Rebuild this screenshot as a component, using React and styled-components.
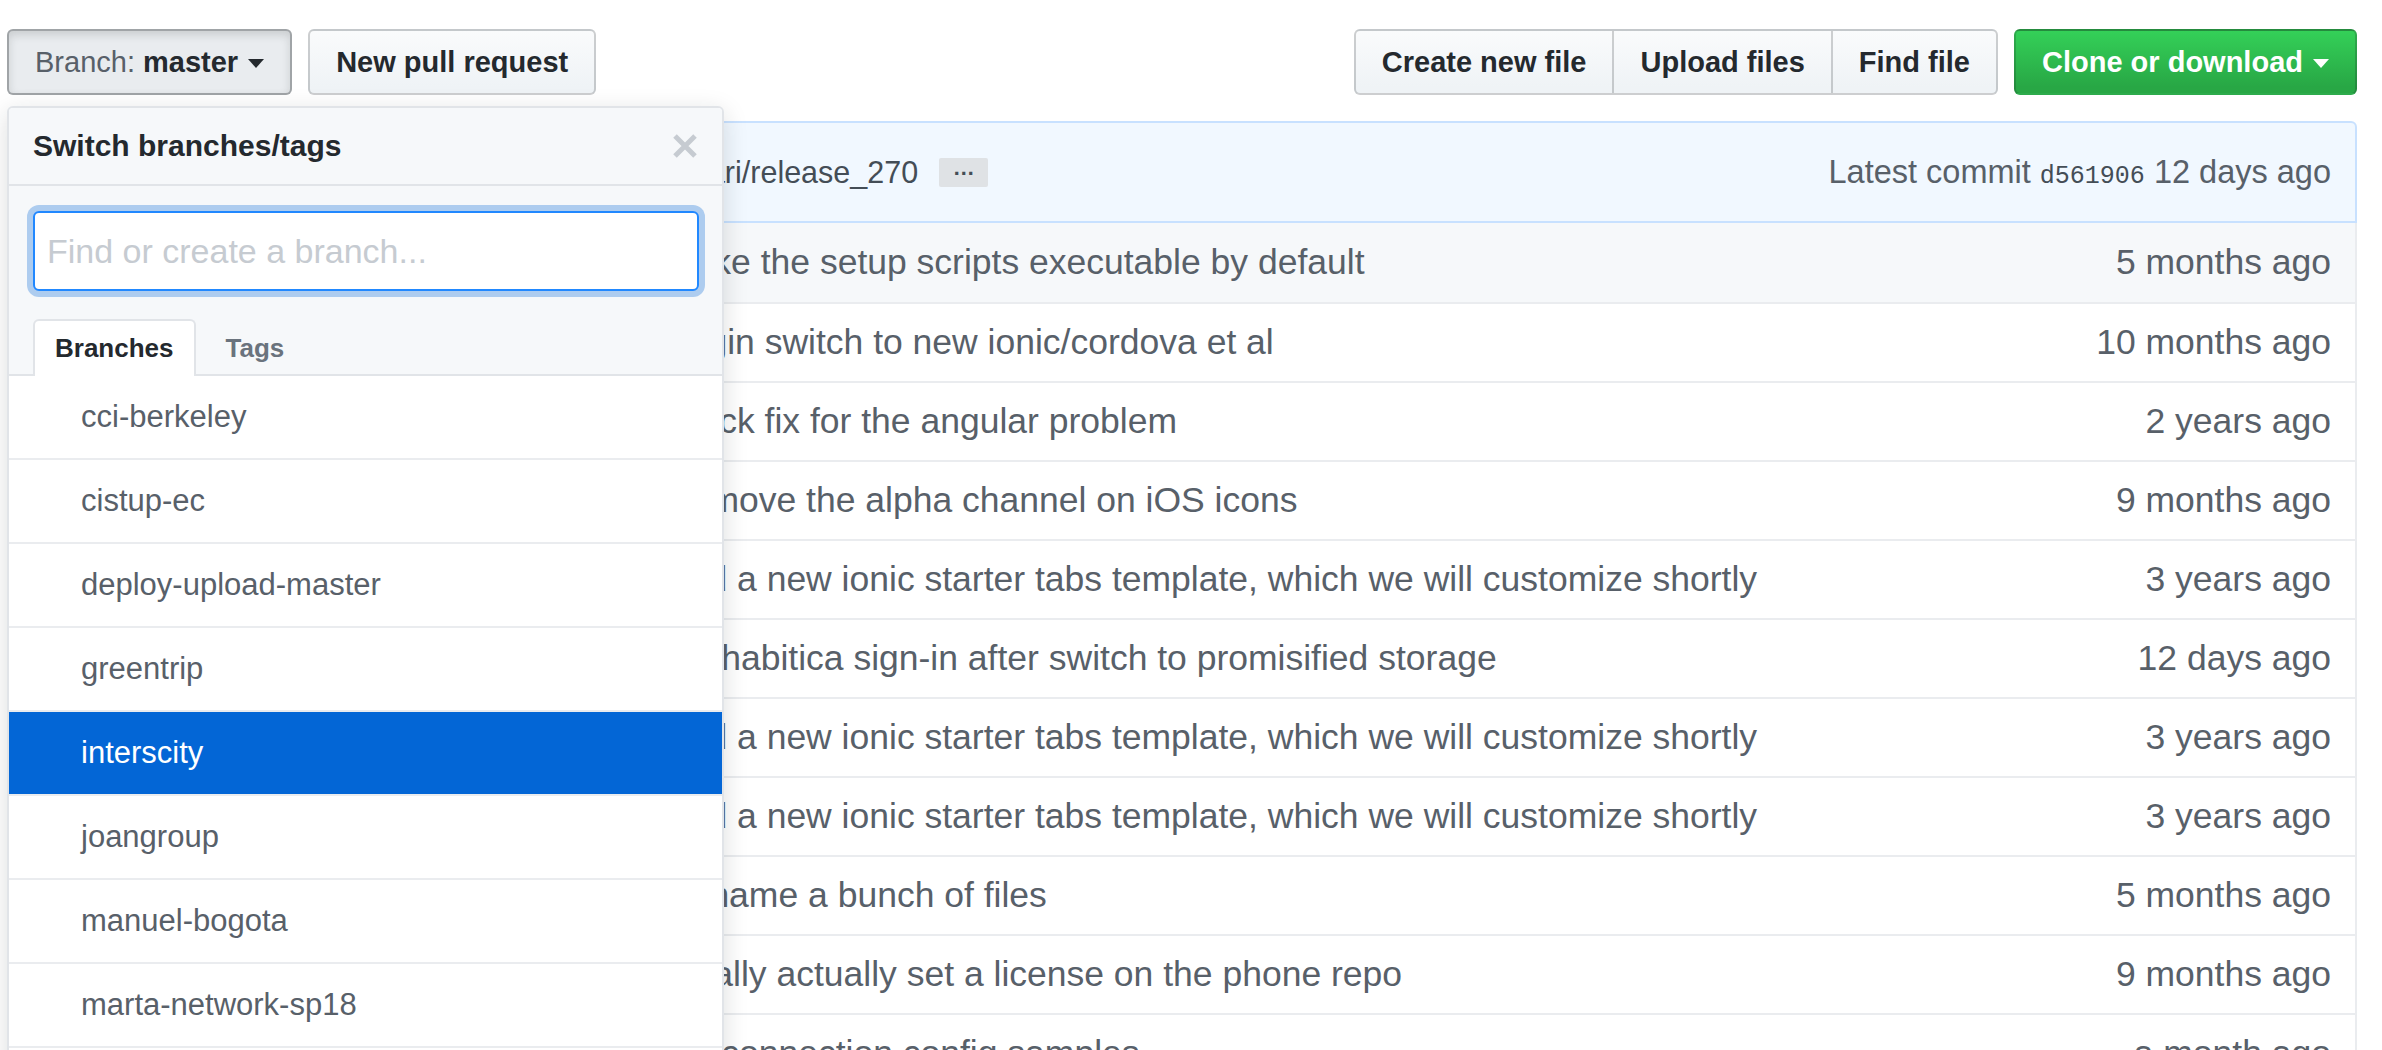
import React from "react";
import styled, {createGlobalStyle, css} from "styled-components";

const GlobalStyle = createGlobalStyle`
  html, body {
    margin: 0;
    padding: 0;
    background: #fff;
    overflow: hidden;
  }

  body {
    font-family: "Liberation Sans", Arial, Helvetica, sans-serif;
    color: #24292e;
  }

  * {
    box-sizing: border-box;
  }
`;

const branches = [
    "cci-berkeley",
    "cistup-ec",
    "deploy-upload-master",
    "greentrip",
    "interscity",
    "joangroup",
    "manuel-bogota",
    "marta-network-sp18",
    "master",
];

const files = [
    {message: "Make the setup scripts executable by default", age: "5 months ago"},
    {message: "Begin switch to new ionic/cordova et al", age: "10 months ago"},
    {message: "Quick fix for the angular problem", age: "2 years ago"},
    {message: "Remove the alpha channel on iOS icons", age: "9 months ago"},
    {message: "Add a new ionic starter tabs template, which we will customize shortly", age: "3 years ago"},
    {message: "Fix habitica sign-in after switch to promisified storage", age: "12 days ago"},
    {message: "Add a new ionic starter tabs template, which we will customize shortly", age: "3 years ago"},
    {message: "Add a new ionic starter tabs template, which we will customize shortly", age: "3 years ago"},
    {message: "Rename a bunch of files", age: "5 months ago"},
    {message: "Finally actually set a license on the phone repo", age: "9 months ago"},
    {message: "Fix connection config samples", age: "a month ago"},
];

const CloseIcon = () => (
    <svg width="26" height="26" viewBox="0 0 26 26">
        <path d="M3 3 L23 23 M23 3 L3 23" stroke="#c6cbd1" strokeWidth="5" strokeLinecap="butt"/>
    </svg>
);

export default function App() {
    return <Page>
        <GlobalStyle/>
        <Toolbar>
            <LeftGroup>
                <Button $selected>
                    <Muted>Branch:</Muted>&nbsp;master
                    <Caret/>
                </Button>
                <Button>New pull request</Button>

                <Menu>
                    <MenuHeader>
                        <MenuTitle>Switch branches/tags</MenuTitle>
                        <CloseIcon/>
                    </MenuHeader>
                    <MenuFilter>
                        <FilterInput placeholder="Find or create a branch..."/>
                        <Tabs>
                            <Tab $active>Branches</Tab>
                            <Tab>Tags</Tab>
                        </Tabs>
                    </MenuFilter>
                    <MenuList>
                        {branches.map(branch =>
                            <MenuItem key={branch} $selected={branch === "interscity"}>
                                {branch}
                            </MenuItem>)}
                    </MenuList>
                </Menu>
            </LeftGroup>

            <RightGroup>
                <ButtonGroup>
                    <GroupButton $pos="first">Create new file</GroupButton>
                    <GroupButton>Upload files</GroupButton>
                    <GroupButton $pos="last">Find file</GroupButton>
                </ButtonGroup>
                <Button $primary>
                    Clone or download
                    <Caret $light/>
                </Button>
            </RightGroup>
        </Toolbar>

        <CommitTease>
            <CommitLeft>
                <Avatar/>
                <Author>shankari</Author>
                <CommitMessage>Merge pull request #394 from shankari/release_270</CommitMessage>
                <Expander>…</Expander>
            </CommitLeft>
            <CommitRight>
                Latest commit <Sha>d561906</Sha> 12 days ago
            </CommitRight>
        </CommitTease>

        <FilesTable>
            {files.map((file, i) =>
                <FileRow key={i} $hover={i === 0}>
                    <IconCell/>
                    <NameCell/>
                    <MessageCell>{file.message}</MessageCell>
                    <AgeCell>{file.age}</AgeCell>
                </FileRow>)}
        </FilesTable>
    </Page>;
}

const Page = styled.div`
  padding: 29px 25px 0 7px;
  height: 1050px;
  overflow: hidden;
`;

const Toolbar = styled.div`
  display: flex;
  justify-content: space-between;
  align-items: center;
  margin-bottom: 26px;
`;

const LeftGroup = styled.div`
  position: relative;
  display: flex;
  gap: 16px;
`;

const RightGroup = styled.div`
  display: flex;
  gap: 16px;
`;

const buttonBase = css`
  height: 66px;
  padding: 0 26px;
  display: inline-flex;
  align-items: center;
  font-family: "Liberation Sans", Arial, sans-serif;
  font-size: 29px;
  font-weight: 700;
  color: #24292e;
  background: linear-gradient(-180deg, #fafbfc 0%, #eff3f6 90%);
  border: 2px solid rgba(27, 31, 35, 0.2);
  white-space: nowrap;
  cursor: pointer;
`;

const Button = styled.button`
  ${buttonBase};
  border-radius: 6px;

  ${props => props.$selected && css`
    background: #e9ecef;
    border-color: rgba(27, 31, 35, 0.35);
    box-shadow: inset 0 4px 8px rgba(27, 31, 35, 0.15);
  `}

  ${props => props.$primary && css`
    color: #fff;
    background: linear-gradient(-180deg, #34d058 0%, #28a745 90%);
  `}
`;

const Muted = styled.span`
  font-weight: 400;
  color: #586069;
`;

const Caret = styled.span`
  display: inline-block;
  margin-left: 10px;
  margin-top: 2px;
  border-top: 9px solid ${props => props.$light ? "#fff" : "#24292e"};
  border-left: 8px solid transparent;
  border-right: 8px solid transparent;
`;

const ButtonGroup = styled.div`
  display: flex;
`;

const GroupButton = styled.button`
  ${buttonBase};
  border-radius: ${props => props.$pos === "first" ? "6px 0 0 6px" : props.$pos === "last" ? "0 6px 6px 0" : "0"};
  margin-left: ${props => props.$pos === "first" ? "0" : "-2px"};
`;

const Menu = styled.div`
  position: absolute;
  top: 77px;
  left: 0;
  width: 717px;
  z-index: 10;
  background: #fff;
  border: 2px solid #e1e4e8;
  border-radius: 6px;
  box-shadow: 0 6px 24px rgba(27, 31, 35, 0.15);
  overflow: hidden;
`;

const MenuHeader = styled.div`
  height: 78px;
  padding: 0 24px;
  display: flex;
  justify-content: space-between;
  align-items: center;
  background: #f6f8fa;
  border-bottom: 2px solid #e1e4e8;
`;

const MenuTitle = styled.span`
  font-size: 30px;
  font-weight: 700;
  color: #24292e;
`;

const MenuFilter = styled.div`
  padding: 25px 0 0;
  background: #f6f8fa;
`;

const FilterInput = styled.input`
  display: block;
  width: calc(100% - 47px);
  height: 80px;
  margin: 0 23px 0 24px;
  padding: 0 12px;
  font-family: "Liberation Sans", Arial, sans-serif;
  font-size: 34px;
  color: #24292e;
  background: #fff;
  border: 2px solid #2188ff;
  border-radius: 6px;
  box-shadow: 0 0 0 6px rgba(3, 102, 214, 0.3);
  outline: none;

  &::placeholder {
    color: #c6cbd1;
  }
`;

const Tabs = styled.div`
  display: flex;
  gap: 8px;
  margin-top: 28px;
  padding: 0 24px;
  border-bottom: 2px solid #e1e4e8;
`;

const Tab = styled.div`
  height: 57px;
  padding: 0 20px;
  margin-bottom: -2px;
  display: flex;
  align-items: center;
  font-size: 26px;
  font-weight: 700;
  color: ${props => props.$active ? "#24292e" : "#6a737d"};
  background: ${props => props.$active ? "#fff" : "transparent"};
  border: 2px solid ${props => props.$active ? "#e1e4e8" : "transparent"};
  border-bottom: none;
  border-radius: 6px 6px 0 0;
`;

const MenuList = styled.div`
  background: #fff;
`;

const MenuItem = styled.div`
  height: 84px;
  padding-left: 72px;
  display: flex;
  align-items: center;
  font-size: 31px;
  color: ${props => props.$selected ? "#fff" : "#586069"};
  background: ${props => props.$selected ? "#0366d6" : "#fff"};
  border-bottom: 2px solid #eaecef;
`;

const CommitTease = styled.div`
  height: 102px;
  padding: 0 24px;
  display: flex;
  justify-content: space-between;
  align-items: center;
  background: #f1f8ff;
  border: 2px solid #c8e1ff;
  border-radius: 6px 6px 0 0;
`;

const CommitLeft = styled.div`
  display: flex;
  align-items: center;
  white-space: nowrap;
`;

const Avatar = styled.span`
  width: 30px;
  height: 30px;
  margin-right: 10px;
  border-radius: 3px;
  background: #8fa7c2;
`;

const Author = styled.span`
  margin-right: 15px;
  font-size: 32px;
  font-weight: 700;
  color: #24292e;
`;

const CommitMessage = styled.span`
  font-size: 30.5px;
  color: #444d56;
`;

const Expander = styled.span`
  width: 49px;
  height: 29px;
  margin-left: 21px;
  display: inline-flex;
  justify-content: center;
  align-items: center;
  padding-bottom: 8px;
  font-size: 22px;
  font-weight: 700;
  color: #444d56;
  background: #dfe2e5;
  border-radius: 2px;
`;

const CommitRight = styled.div`
  font-size: 32.5px;
  color: #586069;
  white-space: nowrap;
`;

const Sha = styled.code`
  font-family: "Liberation Mono", "Courier New", monospace;
  font-size: 25px;
  color: #444d56;
`;

const FilesTable = styled.div`
  border: 2px solid #eaecef;
  border-top: none;
`;

const FileRow = styled.div`
  height: 79px;
  display: grid;
  grid-template-columns: 70px 585px 1fr auto;
  align-items: center;
  font-size: 35.5px;
  color: #586069;
  background: ${props => props.$hover ? "#f6f8fa" : "#fff"};
  border-top: 2px solid #eaecef;

  &:first-child {
    border-top: none;
  }
`;

const IconCell = styled.span``;

const NameCell = styled.span``;

const MessageCell = styled.span`
  white-space: nowrap;
  overflow: hidden;
`;

const AgeCell = styled.span`
  padding-right: 24px;
  text-align: right;
  white-space: nowrap;
`;
